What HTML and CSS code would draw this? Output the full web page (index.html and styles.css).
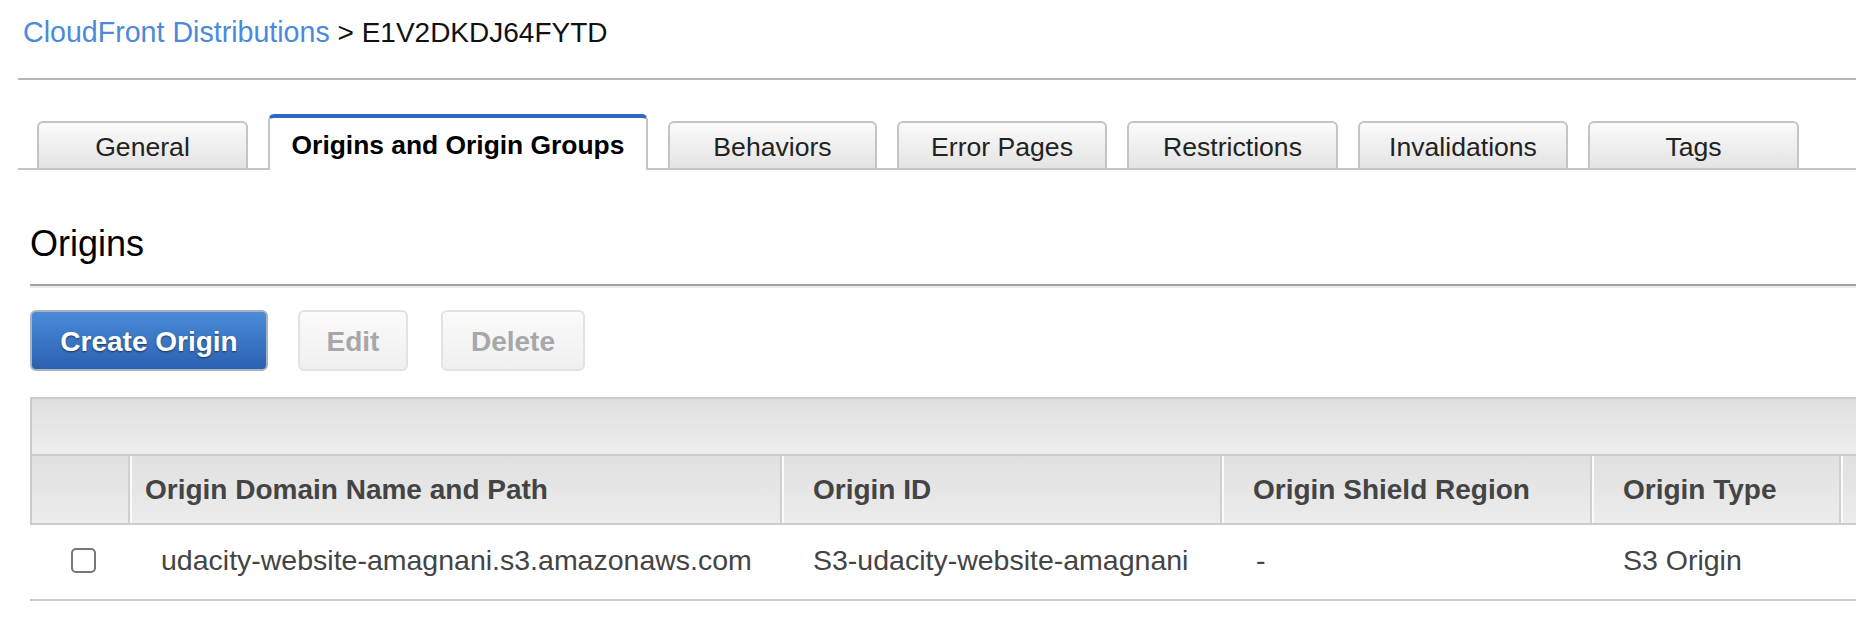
FILE: index.html
```html
<!DOCTYPE html>
<html lang="en">
<head>
<meta charset="utf-8">
<title>CloudFront Distributions &gt; E1V2DKDJ64FYTD</title>
<link rel="stylesheet" href="styles.css">
</head>
<body>
<div class="page">
  <div class="crumbs"><a class="crumb-link" href="#">CloudFront Distributions</a> &gt; E1V2DKDJ64FYTD</div>

  <div class="tabs">
    <div class="tab w211">General</div>
    <div class="tab active">Origins and Origin Groups</div>
    <div class="tab w209">Behaviors</div>
    <div class="tab w210">Error Pages</div>
    <div class="tab w211">Restrictions</div>
    <div class="tab w210">Invalidations</div>
    <div class="tab w211">Tags</div>
  </div>

  <div class="section">
    <h2 class="section-title">Origins</h2>

    <div class="actions">
      <button class="btn btn-primary">Create Origin</button>
      <button class="btn btn-disabled btn-edit">Edit</button>
      <button class="btn btn-disabled btn-delete">Delete</button>
    </div>

    <div class="grid-table">
      <div class="toolbar"></div>
      <div class="row head">
        <div class="cell c1"></div>
        <div class="cell c2">Origin Domain Name and Path</div>
        <div class="cell c3">Origin ID</div>
        <div class="cell c4">Origin Shield Region</div>
        <div class="cell c5">Origin Type</div>
        <div class="cell c6"></div>
      </div>
      <div class="row data">
        <div class="cell c1"><span class="checkbox"></span></div>
        <div class="cell c2">udacity-website-amagnani.s3.amazonaws.com</div>
        <div class="cell c3">S3-udacity-website-amagnani</div>
        <div class="cell c4">-</div>
        <div class="cell c5">S3 Origin</div>
        <div class="cell c6"></div>
      </div>
    </div>
  </div>
</div>
</body>
</html>
```

FILE: styles.css
```css
* { box-sizing: border-box; }

html, body {
  margin: 0;
  padding: 0;
  background: #ffffff;
}

body {
  width: 1856px;
  height: 634px;
  overflow: hidden;
  font-family: "Liberation Sans", Arial, Helvetica, sans-serif;
  color: #111;
}

.page {
  padding-left: 18px;
}

.crumbs {
  height: 80px;
  padding: 17px 0 0 5px;
  font-size: 28px;
  line-height: 32px;
  color: #111;
  border-bottom: 2px solid #b6b6b6;
}

.crumb-link {
  color: #4a89dc;
  text-decoration: none;
  font-size: 28.6px;
  line-height: 28px;
}

/* Tabs */
.tabs {
  margin-top: 34px;
  display: flex;
  align-items: flex-end;
  gap: 20px;
  padding-left: 19px;
  border-bottom: 2px solid #c4c4c4;
}

.tab {
  height: 47px;
  border: 2px solid #c4c4c4;
  border-bottom: none;
  border-radius: 6px 6px 0 0;
  background: linear-gradient(#fbfbfb, #e3e3e3);
  display: flex;
  align-items: center;
  justify-content: center;
  padding-top: 4px;
  font-size: 26.6px;
  color: #222;
  white-space: nowrap;
}

.w209 { width: 209px; }
.w210 { width: 210px; }
.w211 { width: 211px; }

.tab.active {
  width: 380px;
  height: 56px;
  margin-bottom: -2px;
  background: #ffffff;
  border-top: 4px solid #2f67c3;
  padding-top: 2px;
  font-size: 26.4px;
  font-weight: bold;
  color: #000;
}

/* Section */
.section {
  margin-left: 12px;
}

.section-title {
  margin: 54px 0 0 0;
  padding-bottom: 20px;
  font-size: 36px;
  line-height: 40px;
  font-weight: normal;
  color: #000;
  border-bottom: 2px solid #a2a2a2;
  box-shadow: 0 2px 0 #ebebeb;
}

.actions {
  margin-top: 24px;
  display: flex;
  align-items: center;
}

.btn {
  height: 61px;
  border-radius: 6px;
  font-family: "Liberation Sans", Arial, Helvetica, sans-serif;
  font-size: 28px;
  font-weight: bold;
  padding: 3px 0 0 0;
  margin: 0;
  cursor: default;
}

.btn-primary {
  width: 238px;
  border: 2px solid #a9b3c0;
  background: linear-gradient(#4a8cd9, #2b61b1);
  color: #fff;
  text-shadow: 0 1px 2px rgba(0, 0, 0, 0.55);
}

.btn-disabled {
  border: 2px solid #e2e2e2;
  background: linear-gradient(#fbfbfb, #efefef);
  color: #a7a7a7;
}

.btn-edit {
  width: 110px;
  margin-left: 30px;
}

.btn-delete {
  width: 144px;
  margin-left: 33px;
}

/* Table */
.grid-table {
  margin-top: 26px;
}

.toolbar {
  height: 59px;
  border-top: 2px solid #cccccc;
  border-left: 2px solid #cccccc;
  border-bottom: 2px solid #cccccc;
  background: linear-gradient(#dfdfdf, #eeeeee);
}

.row {
  display: grid;
}

.row.head {
  grid-template-columns: 96px 652px 440px 370px 249px 1fr;
  height: 69px;
  border-left: 2px solid #cccccc;
  border-bottom: 2px solid #cccccc;
  background: linear-gradient(#e0e0e0, #ececec);
}

.row.head .cell {
  display: flex;
  align-items: center;
  font-size: 28px;
  font-weight: bold;
  color: #444;
  white-space: nowrap;
}

.row.head .c2,
.row.head .c3,
.row.head .c4,
.row.head .c5,
.row.head .c6 {
  border-left: 2px solid #cfcfcf;
  box-shadow: inset 2px 0 0 #fbfbfb;
}

.row.head .c2 { padding-left: 15px; }
.row.head .c3,
.row.head .c4,
.row.head .c5 { padding-left: 31px; }

.row.data {
  grid-template-columns: 98px 652px 440px 370px 249px 1fr;
  height: 76px;
  border-bottom: 2px solid #cccccc;
}

.row.data .cell {
  display: flex;
  align-items: center;
  padding-bottom: 3px;
  font-size: 28.5px;
  color: #444;
  white-space: nowrap;
}

.row.data .c1 { padding-left: 41px; }
.row.data .c2 { padding-left: 33px; }
.row.data .c3 { padding-left: 33px; }
.row.data .c4 { padding-left: 36px; }
.row.data .c5 { padding-left: 33px; }

.checkbox {
  display: block;
  width: 25px;
  height: 25px;
  border: 2px solid #777;
  border-radius: 5px;
  background: #fff;
}
```
